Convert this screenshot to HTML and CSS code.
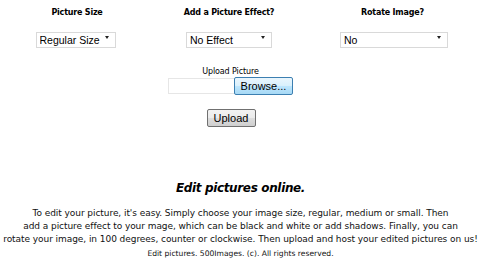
FILE: index.html
```html
<!DOCTYPE html>
<html>
<head>
<meta charset="utf-8">
<link rel="stylesheet" href="styles.css">
</head>
<body>
<div class="page">
  <div class="options">
    <div class="opt">
      <div class="label">Picture Size</div>
      <span class="sel w1"><select><option>Regular Size</option></select></span>
    </div>
    <div class="opt">
      <div class="label">Add a Picture Effect?</div>
      <span class="sel w2"><select><option>No Effect</option></select></span>
    </div>
    <div class="opt">
      <div class="label">Rotate Image?</div>
      <span class="sel w3"><select><option>No</option></select></span>
    </div>
  </div>
  <div class="upload">
    <div class="uplabel">Upload Picture</div>
    <div class="filerow"><span class="filebox"></span><button class="browse">Browse...</button></div>
    <button class="upbtn">Upload</button>
  </div>
  <h1 class="title">Edit pictures online.</h1>
  <p class="desc">To edit your picture, it's easy. Simply choose your image size, regular, medium or small. Then<br>add a picture effect to your mage, which can be black and white or add shadows. Finally, you can<br>rotate your image, in 100 degrees, counter or clockwise. Then upload and host your edited pictures on us!</p>
  <p class="foot">Edit pictures. 500Images. (c). All rights reserved.</p>
</div>
</body>
</html>
```
FILE: styles.css
```css
html, body { margin: 0; padding: 0; background: #fff; }
body { font-family: "DejaVu Sans", Verdana, sans-serif; color: #000; overflow: hidden; }
.page { width: 481px; }
.options { display: grid; grid-template-columns: 154px 150px 177px; padding-top: 7px; }
.opt { display: flex; flex-direction: column; align-items: center; }
.label { font-weight: bold; font-size: 8px; letter-spacing: -0.2px; line-height: 12px; height: 12px; }
.sel { position: relative; display: inline-block; margin-top: 10px; }
.sel select {
  -webkit-appearance: none; appearance: none;
  font-family: "Liberation Sans", Arial, sans-serif; font-size: 10.5px;
  height: 16px; padding: 0 0 0 3px; margin: 0;
  border: 1px solid #d9d9d9; background: #fff; color: #000; box-sizing: border-box;
  border-radius: 0; line-height: 14px;
}
.sel::after {
  content: ""; position: absolute; right: 7px; top: 7px;
  border-left: 2px solid transparent; border-right: 2px solid transparent; border-top: 3px solid #222;
}
.w1 select { width: 80px; }
.w2 select { width: 86px; }
.w3 select { width: 108px; }
.w1 { margin-left: -3px; }
.w3 { margin-left: 3px; }
.upload { display: flex; flex-direction: column; align-items: center; padding-top: 18px; margin-right: 20px; }
.uplabel { font-size: 8px; line-height: 11px; letter-spacing: -0.1px; }
.filerow { display: flex; align-items: center; margin-top: 0; }
.filebox { width: 66px; height: 16px; border: 1px solid #e6e6e6; border-right: none; box-sizing: border-box; }
.browse {
  font-family: "Liberation Sans", Arial, sans-serif; font-size: 11px;
  width: 59px; height: 18px; padding: 0; margin: 0;
  border: 1px solid #3c7fb1; border-radius: 2px;
  background: linear-gradient(#eaf6fd 0%, #d9f0fc 50%, #bee6fd 51%, #a7d9f5 100%); color: #000;
}
.upbtn {
  font-family: "Liberation Sans", Arial, sans-serif; font-size: 11px;
  width: 49px; height: 18px; padding: 0; margin: 14px 0 0 1px;
  border: 1px solid #707070; border-radius: 2px;
  background: linear-gradient(#f2f2f2 0%, #ebebeb 50%, #dddddd 51%, #cfcfcf 100%); color: #000;
}
.title { font-size: 12px; letter-spacing: -0.35px; font-weight: bold; font-style: italic; text-align: center; margin: 53px 0 0; line-height: 16px; }
.desc { font-size: 9px; letter-spacing: -0.06px; line-height: 13px; text-align: center; margin: 11px 0 0; white-space: nowrap; color: #111; }
.foot { font-size: 7.6px; line-height: 10px; text-align: center; margin: 3px 0 0; color: #111; }
```
